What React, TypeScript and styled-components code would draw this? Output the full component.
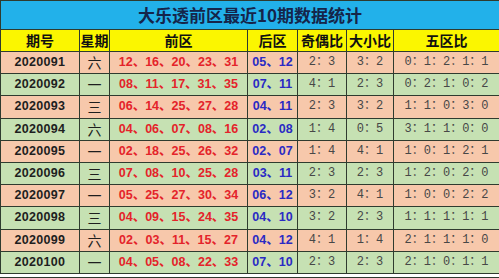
import * as React from "react";
import styled, { createGlobalStyle } from "styled-components";

type Draw = {
  issue: string;
  day: string;
  front: string[];
  back: string[];
  oddEven: string;
  bigSmall: string;
  zones: string;
};

const draws: Draw[] = [
  { issue: "2020091", day: "六", front: ["12", "16", "20", "23", "31"], back: ["05", "12"], oddEven: "2：3", bigSmall: "3：2", zones: "0：1：2：1：1" },
  { issue: "2020092", day: "一", front: ["08", "11", "17", "31", "35"], back: ["07", "11"], oddEven: "4：1", bigSmall: "2：3", zones: "0：2：1：0：2" },
  { issue: "2020093", day: "三", front: ["06", "14", "25", "27", "28"], back: ["04", "11"], oddEven: "2：3", bigSmall: "3：2", zones: "1：1：0：3：0" },
  { issue: "2020094", day: "六", front: ["04", "06", "07", "08", "16"], back: ["02", "08"], oddEven: "1：4", bigSmall: "0：5", zones: "3：1：1：0：0" },
  { issue: "2020095", day: "一", front: ["02", "18", "25", "26", "32"], back: ["02", "07"], oddEven: "1：4", bigSmall: "4：1", zones: "1：0：1：2：1" },
  { issue: "2020096", day: "三", front: ["07", "08", "10", "25", "28"], back: ["03", "11"], oddEven: "2：3", bigSmall: "2：3", zones: "1：2：0：2：0" },
  { issue: "2020097", day: "一", front: ["05", "25", "27", "30", "34"], back: ["06", "12"], oddEven: "3：2", bigSmall: "4：1", zones: "1：0：0：2：2" },
  { issue: "2020098", day: "三", front: ["04", "09", "15", "24", "35"], back: ["04", "10"], oddEven: "3：2", bigSmall: "2：3", zones: "1：1：1：1：1" },
  { issue: "2020099", day: "六", front: ["02", "03", "11", "15", "27"], back: ["04", "12"], oddEven: "4：1", bigSmall: "1：4", zones: "2：1：1：1：0" },
  { issue: "2020100", day: "一", front: ["04", "05", "08", "22", "33"], back: ["07", "10"], oddEven: "2：3", bigSmall: "2：3", zones: "2：1：0：1：1" },
];

const headers = ["期号", "星期", "前区", "后区", "奇偶比", "大小比", "五区比"];
const widths = [79, 30, 138, 50, 49, 47, 106];

const GlobalStyle = createGlobalStyle`
  html, body {
    margin: 0;
    padding: 0;
    background: #ffffff;
  }
  body {
    font-family: "Noto Sans CJK SC", "Liberation Sans", sans-serif;
  }
`;

const Page = styled.div`
  width: 499px;
  height: 278px;
  overflow: hidden;
  background: #ffffff;
`;

const Table = styled.table`
  width: 499px;
  border-collapse: collapse;
  table-layout: fixed;
  border: 1px solid #2f3b2f;
`;

const TitleCell = styled.th`
  height: 28px;
  padding: 0;
  background: #22b1ea;
  color: #15254a;
  font-size: 17px;
  font-weight: 700;
  text-align: center;
  border: 1px solid #2f3b2f;
  line-height: 28px;
`;

const HeadCell = styled.th`
  height: 21px;
  padding: 0;
  background: #fbf600;
  color: #111111;
  font-size: 14px;
  font-weight: 700;
  text-align: center;
  border: 1px solid #2f3b2f;
  line-height: 21px;
`;

const Row = styled.tr<{ $tone: "rose" | "mint" }>`
  background: ${(p) => (p.$tone === "rose" ? "#f7c8ab" : "#c6e1b3")};
`;

const Cell = styled.td`
  height: 21.2px;
  padding: 0;
  text-align: center;
  border: 1px solid #2f3b2f;
  line-height: 21px;
  white-space: nowrap;
  overflow: hidden;
`;

const IssueCell = styled(Cell)`
  font-family: "Liberation Sans", sans-serif;
  font-size: 12.5px;
  font-weight: 700;
  color: #1e1e1e;
  letter-spacing: 0.3px;
`;

const DayCell = styled(Cell)`
  font-size: 14px;
  color: #1e1e1e;
`;

const BallCell = styled(Cell)<{ $color: string }>`
  font-family: "Liberation Sans", "Noto Sans CJK SC", sans-serif;
  font-size: 12.5px;
  font-weight: 700;
  color: ${(p) => p.$color};
`;

const RatioCell = styled(Cell)`
  font-family: "Liberation Mono", "Noto Sans CJK SC", monospace;
  font-size: 12px;
  color: #474747;
`;

const Tail = styled.div`
  height: 3px;
  border-bottom: 1px solid #2f3b2f;
`;

const App: React.FC = () => {
  return (
    <Page>
      <GlobalStyle />
      <Table>
        <colgroup>
          {widths.map((w, i) => (
            <col key={i} style={{ width: w }} />
          ))}
        </colgroup>
        <thead>
          <tr>
            <TitleCell colSpan={7}>大乐透前区最近10期数据统计</TitleCell>
          </tr>
          <tr>
            {headers.map((h) => (
              <HeadCell key={h}>{h}</HeadCell>
            ))}
          </tr>
        </thead>
        <tbody>
          {draws.map((d, i) => (
            <Row key={d.issue} $tone={i % 2 === 0 ? "rose" : "mint"}>
              <IssueCell>{d.issue}</IssueCell>
              <DayCell>{d.day}</DayCell>
              <BallCell $color="#e4232a">{d.front.join("、")}</BallCell>
              <BallCell $color="#2a2ac4">{d.back.join("、")}</BallCell>
              <RatioCell>{d.oddEven}</RatioCell>
              <RatioCell>{d.bigSmall}</RatioCell>
              <RatioCell>{d.zones}</RatioCell>
            </Row>
          ))}
        </tbody>
      </Table>
      <Tail />
    </Page>
  );
};

export default App;
